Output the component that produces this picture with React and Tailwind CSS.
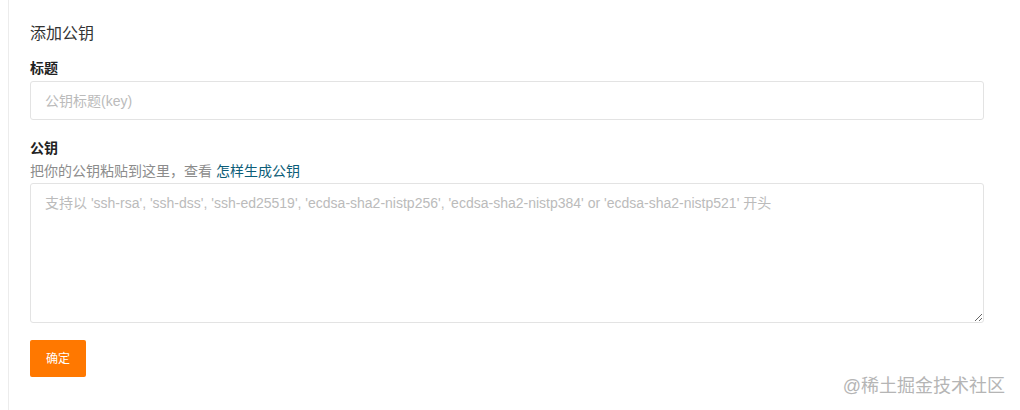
import React, { useState } from "react";

const App = () => {
  const [title, setTitle] = useState("");
  const [key, setKey] = useState("");

  return (
    <div className="relative h-[410px] w-full bg-white font-['Liberation_Sans','Noto_Sans_CJK_SC',sans-serif] text-[#333]">
      <div className="ml-2 h-full border-l border-[#ececec] pl-[21px] pr-[36px]">
        <div className="pt-[23px] text-[16px] leading-[22px] text-[#333]">添加公钥</div>

        <div className="mt-[14px] text-[14px] font-bold leading-[18px] text-[#222]">标题</div>
        <input
          type="text"
          value={title}
          onChange={(e) => setTitle(e.target.value)}
          placeholder="公钥标题(key)"
          className="mt-[4px] block h-[39px] w-full rounded-[3px] border border-[#e3e3e3] px-[14px] text-[14px] outline-none placeholder:text-[#bbb]"
        />

        <div className="mt-[19px] text-[14px] font-bold leading-[18px] text-[#222]">公钥</div>
        <div className="mt-[5px] text-[14px] leading-[18px] text-[#8c8c8c]">
          把你的公钥粘贴到这里，查看 <span className="text-[#0c5d78]">怎样生成公钥</span>
        </div>
        <textarea
          value={key}
          onChange={(e) => setKey(e.target.value)}
          placeholder="支持以 'ssh-rsa', 'ssh-dss', 'ssh-ed25519', 'ecdsa-sha2-nistp256', 'ecdsa-sha2-nistp384' or 'ecdsa-sha2-nistp521' 开头"
          className="mt-[3px] block h-[140px] w-full rounded-[3px] border border-[#e3e3e3] px-[14px] py-[10px] text-[14px] leading-[18px] outline-none placeholder:text-[#bbb]"
        />

        <button className="mt-[17px] h-[37px] w-[56px] rounded-[2px] bg-[#ff7800] text-[12px] text-white">
          确定
        </button>
      </div>

      <div className="absolute bottom-[14px] right-[15px] text-[18px] leading-[20px] text-[#b5b5b5]">
        @稀土掘金技术社区
      </div>
    </div>
  );
};

export default App;
